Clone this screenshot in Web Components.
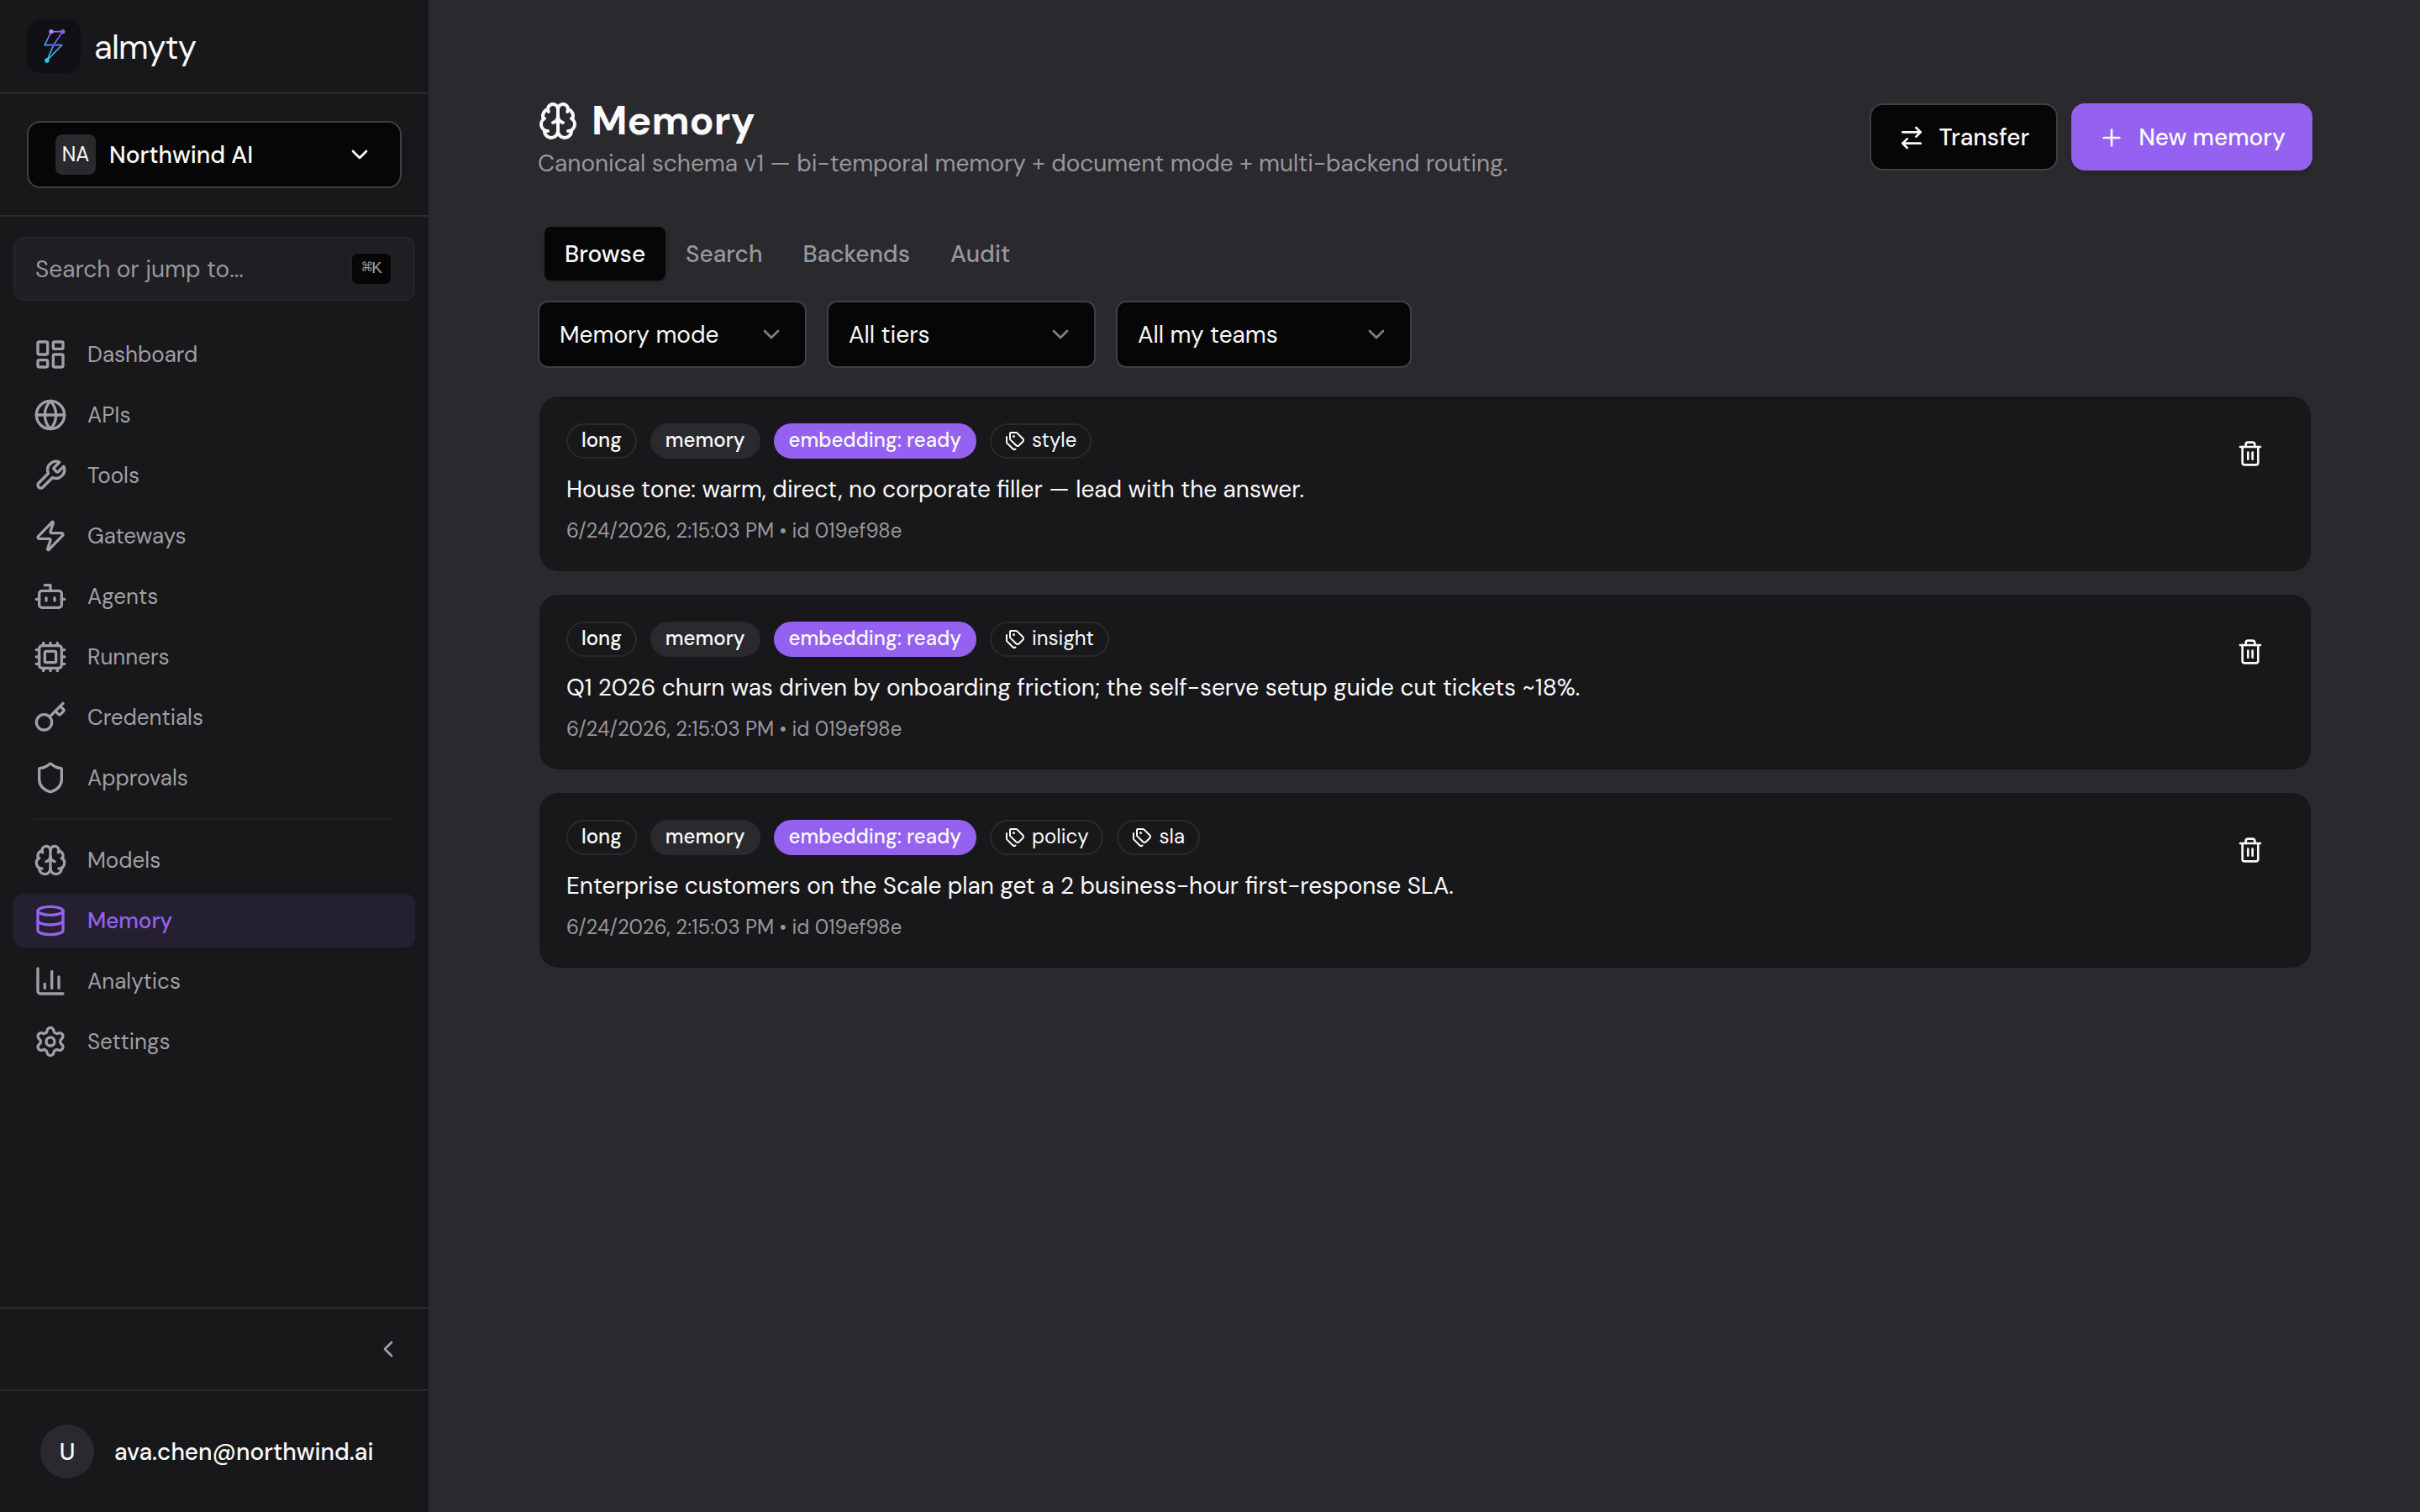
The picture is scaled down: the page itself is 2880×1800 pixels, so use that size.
<!DOCTYPE html>
<html lang="en">
<head>
<meta charset="utf-8">
<title>Memory · almyty</title>
<style>
  html, body { margin: 0; height: 100%; }
  body {
    --bg: #2a292e; --panel: #18181a; --ink: #fafafa; --muted: #a09fa6; --line: #2a2a2d;
    --field: #060606; --field-line: #3f3f44; --accent: #9461f0;
    background: var(--bg); color: var(--ink);
    font: 400 28px/40px "DM Sans", "Open Sans", sans-serif;
    overflow: hidden;
  }
</style>
</head>
<body>
<app-shell>
  <side-bar slot="side">
    <nav-item icon="dashboard">Dashboard</nav-item>
    <nav-item icon="globe">APIs</nav-item>
    <nav-item icon="wrench">Tools</nav-item>
    <nav-item icon="zap">Gateways</nav-item>
    <nav-item icon="bot">Agents</nav-item>
    <nav-item icon="cpu">Runners</nav-item>
    <nav-item icon="key">Credentials</nav-item>
    <nav-item icon="shield">Approvals</nav-item>
    <nav-divider></nav-divider>
    <nav-item icon="brain">Models</nav-item>
    <nav-item icon="database" active>Memory</nav-item>
    <nav-item icon="chart">Analytics</nav-item>
    <nav-item icon="settings">Settings</nav-item>
  </side-bar>
  <page-header icon="brain">
    <span slot="title">Memory</span>
    <span slot="subtitle">Canonical schema v1 — bi-temporal memory + document mode + multi-backend routing.</span>
    <action-button icon="swap">Transfer</action-button>
    <action-button icon="plus" primary>New memory</action-button>
  </page-header>
  <tab-list>
    <tab-item active>Browse</tab-item><tab-item>Search</tab-item><tab-item>Backends</tab-item><tab-item>Audit</tab-item>
  </tab-list>
  <filter-row>
    <select-box style="width:320px">Memory mode</select-box>
    <select-box style="width:320px">All tiers</select-box>
    <select-box style="width:352px">All my teams</select-box>
  </filter-row>
  <memory-list>
    <memory-card>
      <tag-badge slot="tags">long</tag-badge><tag-badge slot="tags" kind="soft">memory</tag-badge><tag-badge slot="tags" kind="accent">embedding: ready</tag-badge><tag-badge slot="tags" icon="tags">style</tag-badge>
      House tone: warm, direct, no corporate filler — lead with the answer.
      <span slot="meta">6/24/2026, 2:15:03 PM • id 019ef98e</span>
    </memory-card>
    <memory-card>
      <tag-badge slot="tags">long</tag-badge><tag-badge slot="tags" kind="soft">memory</tag-badge><tag-badge slot="tags" kind="accent">embedding: ready</tag-badge><tag-badge slot="tags" icon="tags">insight</tag-badge>
      Q1 2026 churn was driven by onboarding friction; the self-serve setup guide cut tickets ~18%.
      <span slot="meta">6/24/2026, 2:15:03 PM • id 019ef98e</span>
    </memory-card>
    <memory-card>
      <tag-badge slot="tags">long</tag-badge><tag-badge slot="tags" kind="soft">memory</tag-badge><tag-badge slot="tags" kind="accent">embedding: ready</tag-badge><tag-badge slot="tags" icon="tags">policy</tag-badge><tag-badge slot="tags" icon="tags">sla</tag-badge>
      Enterprise customers on the Scale plan get a 2 business-hour first-response SLA.
      <span slot="meta">6/24/2026, 2:15:03 PM • id 019ef98e</span>
    </memory-card>
  </memory-list>
</app-shell>
<script>
const p = (...ds) => ds.map(d => `<path d="${d}"/>`).join('');
const ICONS = {
  dashboard: '<rect width="7" height="9" x="3" y="3" rx="1"/><rect width="7" height="5" x="14" y="3" rx="1"/><rect width="7" height="9" x="14" y="12" rx="1"/><rect width="7" height="5" x="3" y="16" rx="1"/>',
  globe: '<circle cx="12" cy="12" r="10"/>' + p('M12 2a14.5 14.5 0 0 0 0 20 14.5 14.5 0 0 0 0-20', 'M2 12h20'),
  wrench: p('M14.7 6.3a1 1 0 0 0 0 1.4l1.6 1.6a1 1 0 0 0 1.4 0l3.77-3.77a6 6 0 0 1-7.94 7.94l-6.91 6.91a2.12 2.12 0 0 1-3-3l6.91-6.91a6 6 0 0 1 7.94-7.94l-3.76 3.76z'),
  zap: p('M4 14a1 1 0 0 1-.78-1.63l9.9-10.2a.5.5 0 0 1 .86.46l-1.92 6.02A1 1 0 0 0 13 10h7a1 1 0 0 1 .78 1.63l-9.9 10.2a.5.5 0 0 1-.86-.46l1.92-6.02A1 1 0 0 0 11 14z'),
  bot: '<rect width="16" height="12" x="4" y="8" rx="2"/>' + p('M12 8V4H8', 'M2 14h2', 'M20 14h2', 'M15 13v2', 'M9 13v2'),
  cpu: '<rect width="16" height="16" x="4" y="4" rx="2"/><rect width="8" height="8" x="8" y="8" rx="1"/>' + p('M12 20v2', 'M12 2v2', 'M17 20v2', 'M17 2v2', 'M2 12h2', 'M2 17h2', 'M2 7h2', 'M20 12h2', 'M20 17h2', 'M20 7h2', 'M7 20v2', 'M7 2v2'),
  key: '<circle cx="7.5" cy="15.5" r="5.5"/>' + p('m15.5 7.5 2.3 2.3a1 1 0 0 0 1.4 0l2.1-2.1a1 1 0 0 0 0-1.4L19 4', 'm21 2-9.6 9.6'),
  shield: p('M20 13c0 5-3.5 7.5-7.66 8.95a1 1 0 0 1-.67-.01C7.5 20.5 4 18 4 13V6a1 1 0 0 1 1-1c2 0 4.5-1.2 6.24-2.72a1.17 1.17 0 0 1 1.52 0C14.51 3.81 17 5 19 5a1 1 0 0 1 1 1z'),
  brain: p('M12 18V5', 'M15 13a4.17 4.17 0 0 1-3-4 4.17 4.17 0 0 1-3 4', 'M17.598 6.5A3 3 0 1 0 12 5a3 3 0 1 0-5.598 1.5', 'M17.997 5.125a4 4 0 0 1 2.526 5.77', 'M18 18a4 4 0 0 0 2-7.464', 'M19.967 17.483A4 4 0 1 1 12 18a4 4 0 1 1-7.967-.517', 'M6 18a4 4 0 0 1-2-7.464', 'M6.003 5.125a4 4 0 0 0-2.526 5.77'),
  database: '<ellipse cx="12" cy="5" rx="9" ry="3"/>' + p('M3 5V19A9 3 0 0 0 21 19V5', 'M3 12A9 3 0 0 0 21 12'),
  chart: p('M3 3v16a2 2 0 0 0 2 2h16', 'M18 17V9', 'M13 17V5', 'M8 17v-3'),
  settings: p('M9.671 4.136a2.34 2.34 0 0 1 4.659 0 2.34 2.34 0 0 0 3.319 1.915 2.34 2.34 0 0 1 2.33 4.033 2.34 2.34 0 0 0 0 3.831 2.34 2.34 0 0 1-2.33 4.033 2.34 2.34 0 0 0-3.319 1.915 2.34 2.34 0 0 1-4.659 0 2.34 2.34 0 0 0-3.32-1.915 2.34 2.34 0 0 1-2.33-4.033 2.34 2.34 0 0 0 0-3.831A2.34 2.34 0 0 1 6.35 6.051a2.34 2.34 0 0 0 3.319-1.915') + '<circle cx="12" cy="12" r="3"/>',
  swap: p('m16 3 4 4-4 4', 'M20 7H4', 'm8 21-4-4 4-4', 'M4 17h16'),
  plus: p('M5 12h14', 'M12 5v14'),
  trash: p('M10 11v6', 'M14 11v6', 'M19 6v14a2 2 0 0 1-2 2H7a2 2 0 0 1-2-2V6', 'M3 6h18', 'M8 6V4a2 2 0 0 1 2-2h4a2 2 0 0 1 2 2v2'),
  tags: p('M13.172 2a2 2 0 0 1 1.414.586l6.71 6.71a2.4 2.4 0 0 1 0 3.408l-4.592 4.592a2.4 2.4 0 0 1-3.408 0l-6.71-6.71A2 2 0 0 1 6 9.172V3a1 1 0 0 1 1-1z', 'M2 7v6.172a2 2 0 0 0 .586 1.414l6.71 6.71a2.4 2.4 0 0 0 3.191.193') + '<circle cx="10.5" cy="6.5" r=".5" fill="currentColor"/>',
  down: p('m6 9 6 6 6-6'),
  left: p('m15 18-6-6 6-6'),
};
const define = (name, css, html) => customElements.define(name, class extends HTMLElement {
  constructor() {
    super();
    this.attachShadow({ mode: 'open' });
  }
  connectedCallback() {
    this.shadowRoot.innerHTML = `<style>:host{box-sizing:border-box}*{box-sizing:border-box}${css}</style>` +
      (typeof html === 'function' ? html(this) : html);
  }
});

define('ui-icon', ':host{display:block;flex:none;width:var(--s,32px);height:var(--s,32px)}svg{display:block;width:100%;height:100%}',
  el => `<svg viewBox="0 0 24 24" fill="none" stroke="currentColor" stroke-width="2" stroke-linecap="round" stroke-linejoin="round">${ICONS[el.getAttribute('name')]}</svg>`);

define('brand-mark', ':host{display:block;width:64px;height:64px;border-radius:16px;background:#111115}svg{display:block}', `
  <svg width="64" height="64" viewBox="0 0 64 64" fill="none">
    <defs><linearGradient id="g" gradientUnits="userSpaceOnUse" x1="36" y1="14" x2="26" y2="50"><stop stop-color="#8b5cf6"/><stop offset="1" stop-color="#22d3ee"/></linearGradient></defs>
    <g stroke="url(#g)" stroke-width="1.6" stroke-linejoin="round"><path d="M29 14.6H42.7L31.7 30.6L23.8 49L41.7 30.6H21.2Z"/></g>
    <circle cx="29" cy="14.6" r="2.7" fill="#a78bfa"/><circle cx="42.7" cy="14.6" r="2.7" fill="#8b5cf6"/>
    <circle cx="31.7" cy="30.6" r="2" fill="#7c3aed"/><circle cx="23.8" cy="49" r="2.7" fill="#22d3ee"/>
  </svg>`);

define('app-shell', `
  :host{display:flex;height:100vh}
  main{flex:1;min-width:0;padding:112px 128px 0;display:flex;flex-direction:column}`,
  '<slot name="side"></slot><main><slot></slot></main>');

define('side-bar', `
  :host{display:flex;flex-direction:column;width:512px;flex:none;background:var(--panel);border-right:2px solid var(--line)}
  .brand{height:112px;padding:0 32px;display:flex;align-items:center;gap:16px;border-bottom:2px solid var(--line)}
  .brand span{font-size:40px;letter-spacing:-.8px;padding-top:1px}
  .org{padding:32px;border-bottom:2px solid var(--line)}
  .nav{flex:1;padding:24px 16px;display:flex;flex-direction:column;gap:8px}
  .collapse{height:98px;padding:0 16px;display:flex;align-items:center;justify-content:flex-end;border-top:2px solid var(--line);color:var(--muted)}
  .collapse ui-icon{margin:0 16px}
  .user{height:146px;padding:0 48px;display:flex;align-items:center;gap:24px;border-top:2px solid var(--line);font-weight:500}
  .user span{padding-top:2px}
  .avatar{width:64px;height:64px;border-radius:50%;background:var(--bg);display:grid;place-items:center;padding-top:1px}`, `
  <div class="brand"><brand-mark></brand-mark><span>almyty</span></div>
  <div class="org"><org-switch></org-switch></div>
  <div class="nav"><search-field></search-field><slot></slot></div>
  <div class="collapse"><ui-icon name="left"></ui-icon></div>
  <div class="user"><div class="avatar">U</div><span>ava.chen@northwind.ai</span></div>`);

define('org-switch', `
  :host{display:flex;align-items:center;height:80px;padding:0 32px;background:var(--field);border:2px solid var(--field-line);border-radius:16px;font-weight:500}
  .av{width:48px;height:48px;border-radius:8px;background:var(--bg);font-size:24px;display:grid;place-items:center;margin-right:16px;font-weight:400;padding-bottom:1px}
  span{padding-top:1px}
  ui-icon{margin-left:auto}`,
  '<div class="av">NA</div><span>Northwind AI</span><ui-icon name="down"></ui-icon>');

define('search-field', `
  :host{display:flex;align-items:center;justify-content:space-between;height:76px;margin-bottom:24px;padding:0 25px 0 24px;background:#1f1e23;border:2px solid #252528;border-radius:12px;color:#98979d}
  span{padding-top:2px}
  kbd{font:400 21px/35px "Liberation Mono",monospace;letter-spacing:-1px;width:50px;height:40px;text-align:center;border:2px solid #222225;border-radius:8px;background:var(--field)}`,
  '<span>Search or jump to...</span><kbd>⌘K</kbd>');

define('nav-item', `
  :host{display:flex;align-items:center;gap:24px;height:64px;padding:0 24px;border-radius:12px;color:var(--muted);font-size:26px}
  :host([active]){background:#25202f;color:var(--accent);font-weight:500}
  ui-icon{--s:40px}`, el => `<ui-icon name="${el.getAttribute('icon')}"></ui-icon><span><slot></slot></span>`);

define('nav-divider', ':host{display:block;height:2px;margin:8px 24px;background:#1f1f22}', '');

define('page-header', `
  :host{display:flex;justify-content:space-between;height:102px}
  h1{margin:0;height:64px;display:flex;align-items:center;gap:16px;font-size:48px;line-height:64px;font-weight:700}
  h1 ui-icon{--s:48px}
  p{margin:0;line-height:38px;color:#98979d}
  .actions{display:flex;gap:16px;padding-top:11px}`,
  el => `<div><h1><ui-icon name="${el.getAttribute('icon')}"></ui-icon><slot name="title"></slot></h1><p><slot name="subtitle"></slot></p></div><div class="actions"><slot></slot></div>`);

define('action-button', `
  :host{display:flex;align-items:center;gap:16px;height:80px;padding:2px 32px 0;border:2px solid var(--field-line);border-radius:16px;background:var(--field);font-weight:500}
  :host([primary]){border:0;background:var(--accent);box-shadow:0 2px 4px #0003}`,
  el => `<ui-icon name="${el.getAttribute('icon')}"></ui-icon><span><slot></slot></span>`);

define('tab-list', ':host{display:flex;margin-top:48px;padding:8px;height:80px}', '<slot></slot>');
define('tab-item', `
  :host{display:flex;align-items:center;height:64px;padding:2px 24px 0;border-radius:8px;color:#98979d;font-weight:500}
  :host([active]){background:var(--field);color:var(--ink);box-shadow:0 2px 4px #0003}`, '<slot></slot>');

define('filter-row', ':host{display:flex;gap:24px;margin-top:16px}', '<slot></slot>');
define('select-box', `
  :host{display:flex;align-items:center;justify-content:space-between;height:80px;padding:0 24px;border:2px solid var(--field-line);border-radius:12px;background:var(--field)}
  span{padding-top:2px}
  ui-icon{opacity:.5}`, '<span><slot></slot></span><ui-icon name="down"></ui-icon>');

define('memory-list', ':host{display:flex;flex-direction:column;gap:24px;margin-top:32px}', '<slot></slot>');
define('memory-card', `
  :host{display:flex;justify-content:space-between;height:212px;padding:32px;border:2px solid var(--line);border-radius:24px;background:var(--panel);background-clip:padding-box}
  .tags{display:flex;gap:16px}
  .text{margin:14px 0 0;height:46px;line-height:46px}
  .meta{margin-top:8px;line-height:36px;font-size:24px;color:#98979d}
  ui-icon{margin:20px 24px}`, `
  <div><div class="tags"><slot name="tags"></slot></div><div class="text"><slot></slot></div><div class="meta"><slot name="meta"></slot></div></div>
  <ui-icon name="trash"></ui-icon>`);
define('tag-badge', `
  :host{display:flex;align-items:center;gap:8px;height:42px;padding:0 16px;border:2px solid var(--line);border-radius:21px;font-size:24px;line-height:38px;font-weight:500}
  :host([kind=soft]){background:var(--bg);border-color:var(--bg)}
  :host([kind=accent]){background:var(--accent);border-color:var(--accent)}
  :host([icon]){font-weight:400}
  span{padding-bottom:2px}
  ui-icon{--s:24px}`,
  el => (el.hasAttribute('icon') ? `<ui-icon name="${el.getAttribute('icon')}"></ui-icon>` : '') + '<span><slot></slot></span>');
</script>
</body>
</html>
